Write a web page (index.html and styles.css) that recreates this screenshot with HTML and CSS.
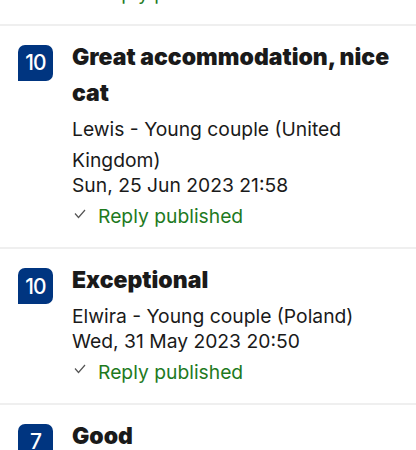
FILE: index.html
```html
<!DOCTYPE html>
<html>
<head>
    <title>Reviews</title>
    <meta name="viewport" content="width=device-width, initial-scale=1">
    <link rel="stylesheet" href="styles.css">
</head>
<body>
    <div class="feed">
        <div class="review">
            <div class="score">9</div>
            <div class="body">
                <h2>Superb</h2>
                <div class="guest">Anna - Family (Germany)</div>
                <div class="date">Mon, 3 Jul 2023 09:12</div>
                <div class="reply">
                    <svg viewBox="0 0 12 10"><path d="M1 4.5 L4.5 8.5 L11 1" /></svg>
                    Reply published
                </div>
            </div>
        </div>

        <div class="review">
            <div class="score">10</div>
            <div class="body">
                <h2>Great accommodation, nice cat</h2>
                <div class="guest">Lewis - Young couple (United Kingdom)</div>
                <div class="date">Sun, 25 Jun 2023 21:58</div>
                <div class="reply">
                    <svg viewBox="0 0 12 10"><path d="M1 4.5 L4.5 8.5 L11 1" /></svg>
                    Reply published
                </div>
            </div>
        </div>

        <div class="review">
            <div class="score">10</div>
            <div class="body">
                <h2>Exceptional</h2>
                <div class="guest">Elwira - Young couple (Poland)</div>
                <div class="date">Wed, 31 May 2023 20:50</div>
                <div class="reply">
                    <svg viewBox="0 0 12 10"><path d="M1 4.5 L4.5 8.5 L11 1" /></svg>
                    Reply published
                </div>
            </div>
        </div>

        <div class="review">
            <div class="score">7</div>
            <div class="body">
                <h2>Good</h2>
                <div class="guest">Marek - Solo traveller (Czech Republic)</div>
                <div class="date">Tue, 23 May 2023 18:04</div>
            </div>
        </div>
    </div>
</body>
</html>
```

FILE: styles.css
```css
body { font-family: Inter, 'Noto Sans', sans-serif; margin: 0; color: #1a1a1a; background: #fff; overflow: hidden; }
.feed { margin-top: -130px; }
.review { display: flex; padding: 13px 18px 19px; border-top: 2px solid #efefef; }
.review:first-child { border-top: none; }
.score { flex: none; width: 35px; height: 36px; margin: 6px 19px 0 0; border-radius: 7px 7px 7px 0;
         background: #003580; color: #fff; font-size: 21px; font-weight: 500;
         display: flex; align-items: center; justify-content: center; letter-spacing: -0.8px; }
.body { flex: 1; }
h2 { font-size: 23px; font-weight: 900; line-height: 36.7px; margin: 0; }
.guest { font-size: 19.3px; line-height: 31px; margin-top: 2px; }
.date { font-size: 19.3px; line-height: 18px; }
.reply { display: flex; align-items: center; gap: 12px; margin-top: 10px; font-size: 19.3px; line-height: 24px; color: #1e7a1e; }
.reply svg { width: 12px; height: 10px; margin: -5px 0 0 2px; fill: none; stroke: #555; stroke-width: 1.2; }
```
